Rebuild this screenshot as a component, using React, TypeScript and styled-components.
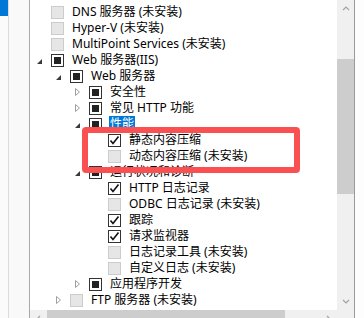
import React from 'react';
import styled, { createGlobalStyle } from 'styled-components';

const Global = createGlobalStyle`
  html, body { margin: 0; padding: 0; background: #fff; }
  body { font-family: "Noto Sans", "Noto Sans CJK SC", sans-serif; }
`;

type Check = 'off' | 'partial' | 'on';
type Exp = 'none' | 'open' | 'closed';

interface Node {
  label: string;
  level: number;
  check: Check;
  exp?: Exp;
  selected?: boolean;
}

const nodes: Node[] = [
  { label: 'DNS 服务器 (未安装)', level: 0, check: 'off' },
  { label: 'Hyper-V (未安装)', level: 0, check: 'off' },
  { label: 'MultiPoint Services (未安装)', level: 0, check: 'off' },
  { label: 'Web 服务器(IIS)', level: 0, check: 'partial', exp: 'open' },
  { label: 'Web 服务器', level: 1, check: 'partial', exp: 'open' },
  { label: '安全性', level: 2, check: 'partial', exp: 'closed' },
  { label: '常见 HTTP 功能', level: 2, check: 'partial', exp: 'closed' },
  { label: '性能', level: 2, check: 'partial', exp: 'open', selected: true },
  { label: '静态内容压缩', level: 3, check: 'on' },
  { label: '动态内容压缩 (未安装)', level: 3, check: 'off' },
  { label: '运行状况和诊断', level: 2, check: 'partial', exp: 'open' },
  { label: 'HTTP 日志记录', level: 3, check: 'on' },
  { label: 'ODBC 日志记录 (未安装)', level: 3, check: 'off' },
  { label: '跟踪', level: 3, check: 'on' },
  { label: '请求监视器', level: 3, check: 'on' },
  { label: '日志记录工具 (未安装)', level: 3, check: 'off' },
  { label: '自定义日志 (未安装)', level: 3, check: 'off' },
  { label: '应用程序开发', level: 2, check: 'partial', exp: 'closed' },
  { label: 'FTP 服务器 (未安装)', level: 1, check: 'off', exp: 'closed' },
];

const Frame = styled.div`
  display: flex;
  width: 364px;
  height: 318px;
  overflow: hidden;
  background: #fff;
`;

const Nav = styled.div`
  width: 8px;
  flex: none;
  background: #fbfbfb;
  border-right: 1px solid #dcdcdc;
`;

const NavActive = styled.div`
  height: 16px;
  background: #0078d7;
`;

const Gutter = styled.div`
  width: 20px;
  flex: none;
  background: #f9f9f9;
  border-right: 1px solid #a9a9a9;
`;

const Panel = styled.div`
  display: grid;
  grid-template-columns: 307px 17px;
  grid-template-rows: 310px 17px;
  flex: none;
  border-right: 1px solid #9a9a9a;
`;

const RightStrip = styled.div`
  flex: 1;
  background: #fdfdfd;
`;

const Tree = styled.div`
  position: relative;
  overflow: hidden;
  padding-top: 4px;
  background: #fff;
`;

const Row = styled.div<{ $level: number }>`
  display: flex;
  align-items: center;
  height: 16px;
  padding-left: ${p => p.$level * 19}px;
  white-space: nowrap;
  font-size: 12px;
  line-height: 16px;
  color: #000;
`;

const Expander = styled.div`
  width: 19px;
  height: 16px;
  flex: none;
  display: flex;
  align-items: center;
  justify-content: center;
`;

const Box = styled.div<{ $check: Check }>`
  width: 13px;
  height: 13px;
  box-sizing: border-box;
  margin-left: 2px;
  flex: none;
  display: flex;
  align-items: center;
  justify-content: center;
  border: 1px solid ${p => (p.$check === 'off' ? '#cccccc' : '#333333')};
  background: ${p => (p.$check === 'off' ? '#e6e6e6' : '#ffffff')};
`;

const Fill = styled.div`
  width: 7px;
  height: 7px;
  background: #222;
`;

const Label = styled.span<{ $selected?: boolean }>`
  margin-left: 7px;
  padding: 0 1px;
  height: 16px;
  background: ${p => (p.$selected ? '#0078d7' : 'transparent')};
  color: ${p => (p.$selected ? '#fff' : '#000')};
`;

const Callout = styled.div`
  position: absolute;
  left: 52px;
  top: 127px;
  width: 218px;
  height: 46px;
  box-sizing: border-box;
  border: 6px solid #fa5052;
  border-radius: 4px;
  pointer-events: none;
`;

const VScroll = styled.div`
  display: flex;
  flex-direction: column;
  background: #f0f0f0;
`;

const ArrowBtn = styled.div`
  width: 17px;
  height: 17px;
  flex: none;
  display: flex;
  align-items: center;
  justify-content: center;
`;

const VTrack = styled.div`
  flex: 1;
  padding-top: 42px;
`;

const VThumb = styled.div`
  height: 135px;
  background: #cdcdcd;
`;

const HScroll = styled.div`
  display: flex;
  background: #f0f0f0;
`;

const HTrack = styled.div`
  flex: 1;
`;

const HThumb = styled.div`
  width: 238px;
  height: 17px;
  background: #cdcdcd;
`;

const Corner = styled.div`
  background: #f0f0f0;
`;

const Chevron = ({ dir }: { dir: 'up' | 'down' | 'left' | 'right' }) => {
  const pts = {
    up: '1,5 4,2 7,5',
    down: '1,2 4,5 7,2',
    left: '5,1 2,4 5,7',
    right: '2,1 5,4 2,7',
  }[dir];
  return (
    <svg width="8" height="8" viewBox="0 0 8 8">
      <polyline points={pts} fill="none" stroke="#a3a3a3" strokeWidth="1.2" />
    </svg>
  );
};

const Toggle = ({ exp }: { exp?: Exp }) => {
  if (exp === 'open')
    return (
      <svg width="19" height="16" viewBox="0 0 19 16">
        <polygon points="12,7 12,12 7,12" fill="#3a3a3a" />
      </svg>
    );
  if (exp === 'closed')
    return (
      <svg width="19" height="16" viewBox="0 0 19 16">
        <polygon points="7.5,4.5 11.5,8 7.5,11.5" fill="none" stroke="#a0a0a0" strokeWidth="1" />
      </svg>
    );
  return null;
};

const CheckBox = ({ check }: { check: Check }) => (
  <Box $check={check}>
    {check === 'partial' && <Fill />}
    {check === 'on' && (
      <svg width="11" height="11" viewBox="0 0 11 11">
        <polyline points="1.5,5.5 4,8.5 9.5,1.5" fill="none" stroke="#111" strokeWidth="1.6" />
      </svg>
    )}
  </Box>
);

export default function App() {
  return (
    <>
      <Global />
      <Frame>
        <Nav>
          <NavActive />
        </Nav>
        <Gutter />
        <Panel>
          <Tree>
            {nodes.map((n, i) => (
              <Row key={i} $level={n.level}>
                <Expander>
                  <Toggle exp={n.exp} />
                </Expander>
                <CheckBox check={n.check} />
                <Label $selected={n.selected}>{n.label}</Label>
              </Row>
            ))}
            <Callout />
          </Tree>
          <VScroll>
            <ArrowBtn>
              <Chevron dir="up" />
            </ArrowBtn>
            <VTrack>
              <VThumb />
            </VTrack>
            <ArrowBtn>
              <Chevron dir="down" />
            </ArrowBtn>
          </VScroll>
          <HScroll>
            <ArrowBtn>
              <Chevron dir="left" />
            </ArrowBtn>
            <HTrack>
              <HThumb />
            </HTrack>
            <ArrowBtn>
              <Chevron dir="right" />
            </ArrowBtn>
          </HScroll>
          <Corner />
        </Panel>
        <RightStrip />
      </Frame>
    </>
  );
}
